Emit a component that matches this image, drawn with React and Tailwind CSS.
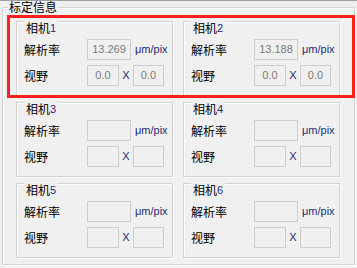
import React from "react";

const cjk = { fontFamily: '"Noto Sans CJK SC", "Noto Sans", sans-serif' };
const lat = { fontFamily: '"Liberation Sans", "Noto Sans", sans-serif' };

function Field({ w, value }) {
  return (
    <div
      className={`${w} h-[21px] border border-[#cdcdcd] bg-[#f0f0f0] flex items-center justify-center text-[11px] text-[#7a7a7a]`}
      style={lat}
    >
      {value}
    </div>
  );
}

function Group({ n, res, fx, fy }) {
  return (
    <div className="h-[75px] border border-[#d3d3d3] shadow-[inset_1px_1px_0_#ffffff,1px_1px_0_#ffffff]">
      <div className="-mt-[1px] ml-[7px] w-fit px-[2px] bg-[#f0f0f0] leading-[14px] flex items-end">
        <span className="text-[12px] text-black" style={cjk}>相机</span>
        <span className="text-[11px] text-[#1f2a78]" style={lat}>{n}</span>
      </div>
      <div className="mt-[4px] pl-[7px] h-[21px] flex items-center">
        <div className="w-[63px] text-[12px] text-black leading-[14px]" style={cjk}>解析率</div>
        <Field w="w-[44px]" value={res} />
        <div className="ml-[4px] text-[11px] text-[#1f2a78]" style={lat}>μm/pix</div>
      </div>
      <div className="mt-[5px] pl-[7px] h-[21px] flex items-center">
        <div className="w-[63px] text-[12px] text-black leading-[14px]" style={cjk}>视野</div>
        <Field w="w-[32px]" value={fx} />
        <div className="w-[14px] text-center text-[11px] text-[#1f2a78]" style={lat}>X</div>
        <Field w="w-[31px]" value={fy} />
      </div>
    </div>
  );
}

export default function App() {
  return (
    <div className="relative w-[357px] h-[268px] bg-[#f0f0f0] overflow-hidden border-t border-[#a0a0a0] pt-[6px] pl-[2px]">
      <div className="w-[353px] h-[258px] border border-[#d3d3d3] shadow-[inset_1px_1px_0_#ffffff,1px_1px_0_#ffffff] pl-[13px]">
        <div
          className="-mt-[8px] -ml-[8px] w-fit px-[1px] bg-[#f0f0f0] text-[12px] leading-[14px] text-black"
          style={cjk}
        >
          标定信息
        </div>
        <div className="mt-[7px] grid grid-cols-[157px_157px] gap-x-[10px] gap-y-[6px]">
          <Group n="1" res="13.269" fx="0.0" fy="0.0" />
          <Group n="2" res="13.188" fx="0.0" fy="0.0" />
          <Group n="3" />
          <Group n="4" />
          <Group n="5" />
          <Group n="6" />
        </div>
      </div>
      <div className="absolute left-[7px] top-[14px] w-[348px] h-[83px] border-[3px] border-[#ff1f1f]" />
    </div>
  );
}
